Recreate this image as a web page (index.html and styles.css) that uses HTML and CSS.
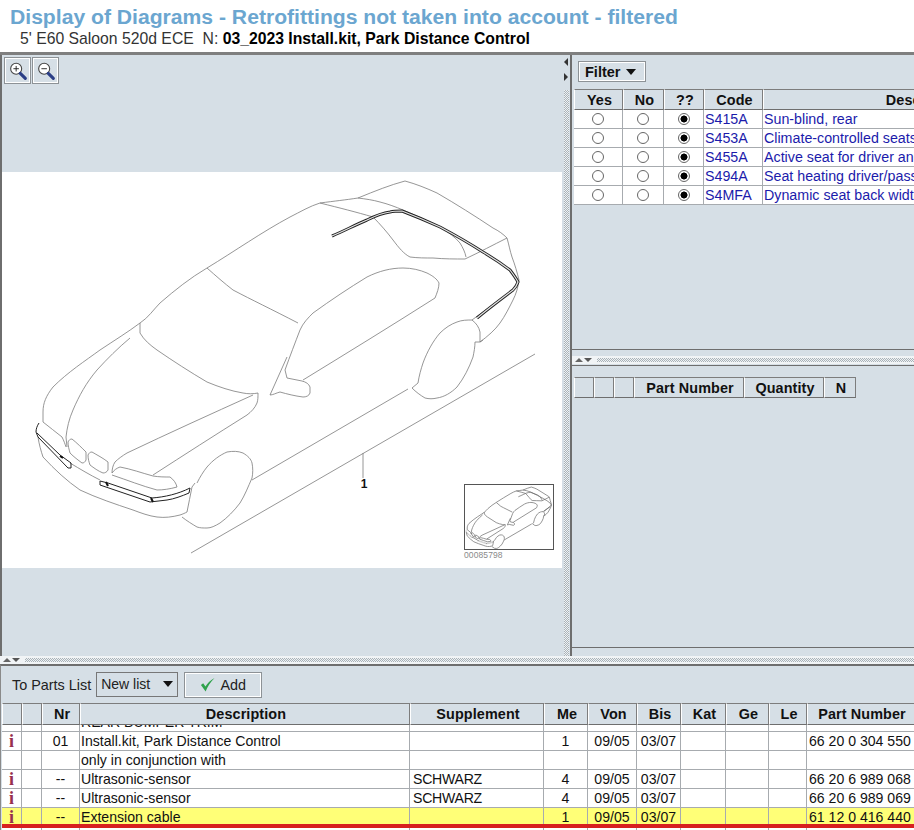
FILE: index.html
```html
<!DOCTYPE html>
<html lang="en">
<head>
<meta charset="utf-8">
<title>Display of Diagrams</title>
<link rel="stylesheet" href="styles.css">
</head>
<body>
<header class="head">
  <h1 class="title">Display of Diagrams - Retrofittings not taken into account - filtered</h1>
  <p class="sub">5' E60 Saloon 520d ECE&nbsp; N: <b>03_2023 Install.kit, Park Distance Control</b></p>
</header>

<main class="main">
  <section class="left">
    <div class="zoombar">
      <button class="zbtn" aria-label="Zoom in"><svg viewBox="0 0 24 24" width="22" height="22"><circle cx="10" cy="9.5" r="6" class="lens"/><path d="M7 9.5h6M10 6.5v6" class="lensmark"/><path d="M14.5 14.5l5.5 5.5" class="handle"/></svg></button>
      <button class="zbtn" aria-label="Zoom out"><svg viewBox="0 0 24 24" width="22" height="22"><circle cx="10" cy="9.5" r="6" class="lens"/><path d="M7 9.5h6" class="lensmark"/><path d="M14.5 14.5l5.5 5.5" class="handle"/></svg></button>
    </div>
    <div class="drawing">
      <svg viewBox="2 172 560 396" width="560" height="396" class="art">
        <defs>
          <g id="car" class="lines">
            <path d="M43 412C43 403 46 396 53 387C68 372 85 361 100 350C115 340 128 332 140 323C148 318 154 309 160 303C175 290 190 278 207 268C235 251 262 232 290 217C300 212 310 206 320 203C335 201 345 200 358 198C375 191 390 185 405 181C416 184 426 188 437 193C456 204 475 216 493 228C499 231 503 234 507 238C509 245 510 251 512 257C515 265 517 272 519 280C518 288 516 294 513 300C509 308 505 316 500 323C495 330 488 336 480 342"/>
            <path d="M320 203C340 208 356 212 373 217C380 224 387 232 393 240C399 248 404 254 410 257C418 258 425 258 433 258C444 259 455 259 465 259C480 252 493 245 507 238"/>
            <path d="M358 198C366 199 373 200 380 202C388 204 396 207 403 210C415 215 428 221 440 227C448 232 455 237 460 243C463 248 465 252 466 257"/>
            <path d="M207 268C216 276 224 283 233 290C252 300 271 309 298 323"/>
            <path d="M285 370C290 356 295 343 300 330C303 323 308 318 313 313C331 300 349 288 367 277C379 271 391 268 403 268C412 268 420 270 427 273C433 276 437 279 439 283C439 288 437 293 435 298C391 326 347 353 303 380"/>
            <path d="M270 395L287 357M285 370L287 378L302 381C306 382 309 384 310 387L310 393C309 396 306 397 303 397C295 396 287 394 280 392C276 393 273 395 270 395"/>
            <path d="M140 323L140 333C144 340 150 345 157 350C173 361 190 372 207 382C219 387 231 391 243 393C248 394 253 394 258 393C258 397 258 400 257 403C255 408 251 412 247 415C215 435 184 455 153 475"/>
            <path d="M253 395C211 414 169 433 127 453C122 456 118 459 115 462C113 465 112 469 112 473"/>
            <path d="M130 338C118 348 107 359 97 370C86 383 79 396 73 410C69 419 67 428 66 437L67 447"/>
            <path d="M43 412L43 422C49 427 56 432 62 437C64 441 65 444 66 447"/>
            <path d="M68 442C69 440 70 439 72 439C77 443 82 448 86 452L86 460C85 462 84 463 82 463C78 460 74 457 70 453C69 449 68 446 68 442Z"/>
            <path d="M88 455C89 453 90 452 92 452C97 455 103 458 108 462L108 470C107 472 105 473 103 473C98 471 94 468 90 465C89 462 88 459 88 455Z"/>
            <path d="M112 473C114 470 117 468 120 467C131 469 142 473 153 476C159 477 165 477 170 477C174 480 176 483 177 487C170 489 163 490 157 490C142 486 127 480 112 475"/>
            <path d="M38 437C39 444 41 451 43 457C55 470 67 481 80 490C97 498 115 504 133 510C141 513 149 516 157 517C165 518 172 517 180 515C183 514 185 513 187 512C189 504 190 495 192 487L195 483"/>
            <path d="M70 463C80 469 90 475 100 480"/>
            <path d="M197 483C200 477 203 472 207 467C213 460 220 455 227 452C233 451 238 451 243 453C248 456 251 459 252 463C253 468 253 473 252 478C248 487 245 495 240 503C234 511 227 518 220 523C215 526 211 528 207 528C203 528 200 528 197 527C192 524 187 521 182 517"/>
            <path d="M252 480L408 389"/>
            <path d="M418 383C419 376 421 369 423 363C427 352 433 341 440 333C445 328 451 324 457 322C462 320 467 320 472 320C476 323 479 327 480 332L480 342L475 342C475 347 474 352 473 357C469 368 464 378 457 387C451 393 444 397 437 398C433 399 429 399 425 398C420 395 416 392 412 388L418 383"/>
            <path d="M472 320L510 292M480 342L483 340"/>
            <path class="strip" d="M39 423C37 426 36 429 36 432L38 437L68 468L71 468L71 463L60 455L37 433"/>
            <path class="strip" d="M100 481L108 483L152 498C165 497 178 494 190 488L189 493C182 496 174 499 167 500L150 502L100 485Z"/>
            <path class="mark" d="M60 456l3 2M106 482l2 4M151 498l2 4"/>
            <path class="band" d="M332 236C344 231 355 225 367 220C375 216 382 213 390 212C394 211 398 211 402 211C415 216 427 221 440 227C455 235 469 243 483 252C493 258 502 264 510 270C513 274 516 278 518 282C517 285 515 288 513 290C501 299 489 308 477 318"/>
            <path class="bandcore" d="M332 236C344 231 355 225 367 220C375 216 382 213 390 212C394 211 398 211 402 211C415 216 427 221 440 227C455 235 469 243 483 252C493 258 502 264 510 270C513 274 516 278 518 282C517 285 515 288 513 290C501 299 489 308 477 318"/>
          </g>
        </defs>
        <use href="#car"/>
        <path class="lines" d="M191 553L535 354M363 453L363 478"/>
        <text x="364" y="488" class="callout">1</text>
        <rect x="464.5" y="484.5" width="89" height="65" class="inset"/>
        <use href="#car" transform="translate(459.6 455) scale(.177)"/>
        <text x="464" y="558" class="artno">00085798</text>
      </svg>
    </div>
  </section>

  <div class="vsplit">
    <span class="tri-l"></span>
    <span class="tri-r"></span>
    <span class="vdots"></span>
  </div>

  <section class="right">
    <div class="pane-top">
      <button class="filter">Filter <span class="tri-d"></span></button>
      <table class="grid codes">
        <colgroup><col class="c-yes"><col class="c-no"><col class="c-q"><col class="c-code"><col class="c-desc"></colgroup>
        <thead><tr><th>Yes</th><th>No</th><th>??</th><th>Code</th><th>Description</th></tr></thead>
        <tbody>
          <tr><td class="ctr"><input type="radio" name="r1"></td><td class="ctr"><input type="radio" name="r1"></td><td class="ctr"><input type="radio" name="r1" checked></td><td>S415A</td><td>Sun-blind, rear</td></tr>
          <tr><td class="ctr"><input type="radio" name="r2"></td><td class="ctr"><input type="radio" name="r2"></td><td class="ctr"><input type="radio" name="r2" checked></td><td>S453A</td><td>Climate-controlled seats</td></tr>
          <tr><td class="ctr"><input type="radio" name="r3"></td><td class="ctr"><input type="radio" name="r3"></td><td class="ctr"><input type="radio" name="r3" checked></td><td>S455A</td><td>Active seat for driver and</td></tr>
          <tr><td class="ctr"><input type="radio" name="r4"></td><td class="ctr"><input type="radio" name="r4"></td><td class="ctr"><input type="radio" name="r4" checked></td><td>S494A</td><td>Seat heating driver/passenger</td></tr>
          <tr><td class="ctr"><input type="radio" name="r5"></td><td class="ctr"><input type="radio" name="r5"></td><td class="ctr"><input type="radio" name="r5" checked></td><td>S4MFA</td><td>Dynamic seat back width</td></tr>
        </tbody>
      </table>
    </div>
    <div class="hsplit inner"><span class="tri-u"></span><span class="tri-d small"></span><span class="hdots"></span></div>
    <div class="pane-low">
      <table class="grid parts">
        <colgroup><col class="p-a"><col class="p-a"><col class="p-a"><col class="p-num"><col class="p-qty"><col class="p-n"></colgroup>
        <thead><tr><th></th><th></th><th></th><th>Part Number</th><th>Quantity</th><th>N</th></tr></thead>
      </table>
    </div>
    <div class="pane-foot"></div>
  </section>
</main>

<div class="hsplit outer"><span class="tri-u"></span><span class="tri-d small"></span><span class="hdots"></span></div>

<section class="bottom">
  <div class="tools">
    <span class="tolabel">To Parts List</span>
    <div class="select">New list <span class="tri-d"></span></div>
    <button class="add"><svg viewBox="0 0 16 16" width="15" height="15"><path d="M1 8.5L6 15.5C8 10 11 5.5 15.5 1C10.5 3.5 8 7 5.8 10L3.4 6.6Z" class="check"/></svg>Add</button>
  </div>
  <table class="grid list">
    <colgroup><col class="l-i"><col class="l-b"><col class="l-nr"><col class="l-desc"><col class="l-sup"><col class="l-me"><col class="l-von"><col class="l-bis"><col class="l-kat"><col class="l-ge"><col class="l-le"><col class="l-pn"></colgroup>
    <thead><tr><th></th><th></th><th>Nr</th><th>Description</th><th>Supplement</th><th>Me</th><th>Von</th><th>Bis</th><th>Kat</th><th>Ge</th><th>Le</th><th>Part Number</th></tr></thead>
    <tbody>
      <tr class="cut"><td></td><td></td><td></td><td><div class="clip"><span>REAR BUMPER TRIM</span></div></td><td></td><td></td><td></td><td></td><td></td><td></td><td></td><td></td></tr>
      <tr><td class="info">i</td><td></td><td class="ctr">01</td><td>Install.kit, Park Distance Control</td><td></td><td class="ctr">1</td><td class="ctr">09/05</td><td class="ctr">03/07</td><td></td><td></td><td></td><td class="pn">66 20 0 304 550</td></tr>
      <tr><td></td><td></td><td></td><td>only in conjunction with</td><td></td><td></td><td></td><td></td><td></td><td></td><td></td><td></td></tr>
      <tr><td class="info">i</td><td></td><td class="ctr">--</td><td>Ultrasonic-sensor</td><td class="sup">SCHWARZ</td><td class="ctr">4</td><td class="ctr">09/05</td><td class="ctr">03/07</td><td></td><td></td><td></td><td class="pn">66 20 6 989 068</td></tr>
      <tr><td class="info">i</td><td></td><td class="ctr">--</td><td>Ultrasonic-sensor</td><td class="sup">SCHWARZ</td><td class="ctr">4</td><td class="ctr">09/05</td><td class="ctr">03/07</td><td></td><td></td><td></td><td class="pn">66 20 6 989 069</td></tr>
      <tr class="hit"><td class="info">i</td><td></td><td class="ctr">--</td><td>Extension cable</td><td></td><td class="ctr">1</td><td class="ctr">09/05</td><td class="ctr">03/07</td><td></td><td></td><td></td><td class="pn">61 12 0 416 440</td></tr>
      <tr><td></td><td></td><td></td><td></td><td></td><td></td><td></td><td></td><td></td><td></td><td></td><td></td></tr>
    </tbody>
  </table>
  <div class="redline"></div>
</section>
</body>
</html>
```
FILE: styles.css
```css
* { box-sizing: border-box; }
html, body { margin: 0; height: 830px; overflow: hidden; }
body {
  width: 914px;
  background: #d6dfe6;
  font-family: "Liberation Sans", Arial, sans-serif;
  color: #111;
}
button { font-family: inherit; padding: 0; }

.head { height: 55px; background: #fff; border-bottom: 3px solid #7f7f7f; padding: 4px 0 0 10px; }
.title { margin: 0; font-size: 21.14px; line-height: 26px; font-weight: bold; color: #6ba6d0; white-space: nowrap; }
.sub { margin: 0; padding-left: 10px; font-size: 15.75px; line-height: 18px; white-space: nowrap; color: #333; }
.sub b { color: #000; }

.main { display: flex; height: 601px; }
.left { width: 563px; flex: none; border-left: 2px solid #6e6e6e; display: flex; flex-direction: column; }
.zoombar { height: 117px; flex: none; display: flex; gap: 1px; padding: 2px 0 0 2px; align-items: flex-start; }
.zbtn { width: 27px; height: 27px; background: #d6dfe6; border: 1px solid #8d9296; box-shadow: inset 0 0 0 1px #fff; display: flex; align-items: center; justify-content: center; }
.lens { fill: #fff; stroke: #444; stroke-width: 1.2; }
.lensmark { fill: none; stroke: #222; stroke-width: 1; }
.handle { fill: none; stroke: #2b3e86; stroke-width: 3.4; stroke-linecap: round; }
.drawing { width: 560px; height: 396px; flex: none; background: #fff; }
.art { display: block; }
.lines { fill: none; stroke: #7b7b7b; stroke-width: .8; vector-effect: non-scaling-stroke; }
#car > path { vector-effect: non-scaling-stroke; }
#car > .strip { stroke: #222; stroke-width: 1; vector-effect: none; }
#car > .mark { stroke: #111; stroke-width: 2; vector-effect: none; }
#car > .band { stroke: #222; stroke-width: 3; stroke-linejoin: round; vector-effect: none; }
#car > .bandcore { stroke: #e4e4e4; stroke-width: 1.2; stroke-linejoin: round; vector-effect: none; }
.callout { font-size: 12px; font-weight: bold; text-anchor: middle; fill: #111; }
.inset { fill: none; stroke: #555; stroke-width: 1; }
.artno { font-size: 8.5px; fill: #8a8a8a; letter-spacing: .1px; }

.vsplit { width: 7px; flex: none; position: relative; display: flex; flex-direction: column; align-items: flex-start; padding: 0 0 0 1px; }
.vdots, .hdots {
  background-color: #eef2f4;
  background-image: conic-gradient(#aab2b8 25%, transparent 0 50%, #aab2b8 0 75%, transparent 0);
  background-size: 2px 2px;
}
.vdots { flex: 1; width: 5px; margin-top: 9px; }
.tri-l { width: 0; height: 0; margin-top: 3px; border: 4px solid transparent; border-left: 0; border-right: 4px solid #333; }
.tri-r { width: 0; height: 0; margin-top: 7px; border: 4px solid transparent; border-right: 0; border-left: 4px solid #333; }

.right { flex: 1; min-width: 0; border-left: 2px solid #6e6e6e; display: flex; flex-direction: column; overflow: hidden; }
.pane-top { height: 295px; flex: none; padding: 6px 0 0 2px; border-bottom: 1px solid #6e6e6e; }
.filter {
  display: flex; align-items: center; gap: 6px;
  width: 68px; height: 21px; margin-left: 4px; padding-left: 6px;
  background: #d6dfe6; border: 1px solid #8d9296; box-shadow: inset 0 0 0 1px #fff;
  font-size: 14.5px; font-weight: bold; color: #111;
}
.tri-d { display: inline-block; width: 0; height: 0; border: 5px solid transparent; border-bottom: 0; border-top: 6px solid #111; }
.tri-d.small { border-width: 4px 4px 0; border-top-color: #555; }
.tri-u { width: 0; height: 0; border: 4px solid transparent; border-top: 0; border-bottom: 4px solid #666; }

.grid { border-collapse: separate; border-spacing: 0; table-layout: fixed; font-size: 14.1px; }
.grid th {
  height: 21px; padding: 0 0 0 2px; background: #d6dfe6; font-size: 14.4px; font-weight: bold; text-align: center; color: #111;
  border-top: 1px solid #7d7d7d; border-bottom: 1px solid #6e6e6e; border-right: 1px solid #7d7d7d; border-left: 1px solid #fff;
  white-space: nowrap; letter-spacing: .1px;
}
.grid td {
  height: 19px; padding: 0 0 0 1px; background: #fff;
  border-right: 1px solid #a7abaf; border-bottom: 1px solid #a7abaf;
  white-space: nowrap; overflow: hidden; line-height: 18px;
}
.grid td.ctr { text-align: center; padding: 0; }
.grid td.sup { padding-left: 3px; letter-spacing: -.25px; }
.grid td.pn { padding-left: 2px; }

.codes { width: 513px; margin-top: 7px; }
.codes td { color: #1b1bab; font-size: 14.25px; }
.c-yes { width: 49px; } .c-no { width: 41px; } .c-q { width: 40px; } .c-code { width: 59px; } .c-desc { width: 324px; }
input[type="radio"] {
  appearance: none; display: block; width: 12px; height: 12px; margin: 0 auto; border: 1px solid #666; border-radius: 50%; background: #fff;
}
input[type="radio"]:checked { background: radial-gradient(circle, #000 0 3.2px, #fff 3.8px); }

.hsplit { display: flex; align-items: center; gap: 1px; height: 8px; background: #f1f4f6; padding-left: 3px; }
.hdots { flex: 1; height: 4px; margin-left: 4px; }
.hsplit.inner { margin-top: 6px; flex: none; }
.pane-low { flex: 1; min-height: 0; padding: 11px 0 0 2px; border-top: 1px solid #6e6e6e; margin-top: 1px; border-bottom: 1px solid #6e6e6e; }
.pane-foot { height: 8px; flex: none; }
.parts { width: 282px; }
.p-a { width: 20px; } .p-num { width: 110px; } .p-qty { width: 80px; } .p-n { width: 32px; }

.bottom { position: relative; height: 166px; border-top: 2px solid #6e6e6e; border-left: 1px solid #8a8a8a; overflow: hidden; }
.tools { height: 37px; display: flex; align-items: center; padding: 0 0 0 11px; font-size: 14.4px; color: #222; }
.tolabel { margin-right: 5px; }
.select { width: 82px; height: 25px; border: 1px solid #777; background: #d6dfe6; display: flex; align-items: center; justify-content: space-between; padding: 0 4px 2px 4px; margin-right: 6px; font-size: 14px; }
.add { width: 78px; height: 26px; display: flex; align-items: center; justify-content: center; gap: 5px; background: #d6dfe6; border: 1px solid #8d9296; box-shadow: inset 0 0 0 1px #fff; font-size: 14.4px; color: #222; }
.check { fill: #2fa24c; }

.list { width: 913px; margin: 0 0 0 1px; }
.list th { height: 22px; }
.l-i { width: 20px; } .l-b { width: 20px; } .l-nr { width: 38px; } .l-desc { width: 330px; } .l-sup { width: 134px; }
.l-me { width: 44px; } .l-von { width: 49px; } .l-bis { width: 44px; } .l-kat { width: 45px; } .l-ge { width: 43px; } .l-le { width: 38px; } .l-pn { width: 108px; }
.cut td { height: 7px; line-height: 7px; }
.clip { height: 6px; overflow: hidden; position: relative; }
.clip span { display: block; line-height: 18px; margin-top: -12px; }
.info { font-family: "Liberation Serif", serif; font-weight: bold; font-size: 18px; color: #96304f; text-align: center; padding: 0 !important; }
.hit td { background: #ffff77; }
.redline { position: absolute; left: 1px; right: 0; top: 158px; height: 4px; background: #d7201f; }
```
